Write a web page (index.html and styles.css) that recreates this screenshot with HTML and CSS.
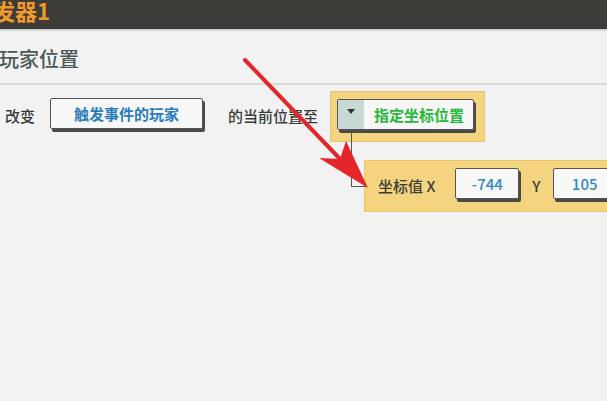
FILE: index.html
```html
<!DOCTYPE html>
<html lang="zh">
<head>
<meta charset="utf-8">
<link rel="stylesheet" href="styles.css">
</head>
<body>
<div class="page">
  <div class="header"><span class="header-title">触发器1</span></div>
  <div class="title">玩家位置</div>
  <div class="canvas">
    <div class="row">
      <span class="label first">改变</span>
      <div class="btn">触发事件的玩家</div>
      <span class="label mid">的当前位置至</span>
      <div class="group">
        <div class="ybox">
          <div class="dropdown">
            <div class="dd-toggle"><span class="tri"></span></div>
            <div class="dd-text">指定坐标位置</div>
          </div>
        </div>
        <div class="sub">
          <div class="ybox2">
            <span class="label2">坐标值 X</span>
            <div class="num">-744</div>
            <span class="label2 ylab">Y</span>
            <div class="num">105</div>
          </div>
        </div>
      </div>
    </div>
  </div>
  <svg class="arrow" width="607" height="401" viewBox="0 0 607 401">
    <line x1="245" y1="60" x2="342" y2="161" stroke="#e4262a" stroke-width="4" stroke-linecap="round"/>
    <polygon points="368,188 346,141 340,159 319,158" fill="#e4262a"/>
  </svg>
</div>
</body>
</html>
```
FILE: styles.css
```css
html, body {
  margin: 0;
  padding: 0;
  background: #f2f2f2;
}
.page {
  position: relative;
  width: 607px;
  height: 401px;
  overflow: hidden;
  font-family: "Noto Sans CJK SC", "Noto Sans", sans-serif;
}
.header {
  height: 29px;
  background: #3e3c38;
  overflow: hidden;
  box-shadow: 0 1px 2px rgba(0,0,0,0.25);
}
.header-title {
  display: block;
  margin: -5px 0 0 -29px;
  font-size: 22px;
  line-height: 30px;
  font-weight: 700;
  color: #f09a2c;
  white-space: nowrap;
}
.title {
  padding: 7px 0 0 0;
  height: 47px;
  line-height: 46px;
  font-size: 20px;
  font-weight: 500;
  color: #4a5858;
  border-bottom: 2px solid #d9d9d9;
  margin-left: -1px;
}
.canvas {
  padding-top: 6px;
}
.row {
  display: flex;
  align-items: flex-start;
  padding-left: 5px;
  width: 1000px;
}
.row > * {
  flex-shrink: 0;
  white-space: nowrap;
}
.label {
  font-size: 15px;
  line-height: 50px;
  color: #3a3a3a;
  font-weight: 500;
}
.label.mid {
  margin-left: 25px;
}
.btn {
  margin: 7px 0 0 15px;
  width: 151px;
  height: 29px;
  border: 1px solid #555;
  border-radius: 2px;
  background: #f8f8f8;
  box-shadow: 2px 3px 0 #4b4a46;
  color: #2a7cbf;
  font-size: 15px;
  font-weight: 700;
  text-align: center;
  line-height: 29px;
}
.group {
  margin-left: 12px;
  display: flex;
  flex-direction: column;
}
.ybox {
  align-self: flex-start;
  background: #f4d47f;
  border: 1px solid #e6c56e;
  padding: 7px 10px 11px 6px;
}
.dropdown {
  display: flex;
  height: 29px;
  width: 135px;
  border: 1px solid #555;
  border-radius: 2px;
  box-shadow: 2px 3px 0 #4b4a46;
  background: #f7f7f7;
  overflow: hidden;
}
.dd-toggle {
  width: 26px;
  flex-shrink: 0;
  background: #c7d8d5;
  display: flex;
  justify-content: center;
  padding-top: 9px;
  box-sizing: border-box;
}
.tri {
  width: 0;
  height: 0;
  border-left: 4px solid transparent;
  border-right: 4px solid transparent;
  border-top: 5px solid #2e3433;
}
.dd-text {
  padding-left: 10px;
  color: #25b83a;
  font-size: 15px;
  font-weight: 700;
  line-height: 29px;
  white-space: nowrap;
}
.sub {
  position: relative;
  margin: 18px 0 0 34px;
}
.sub::before {
  content: "";
  position: absolute;
  left: -13px;
  top: -28px;
  width: 14px;
  height: 54px;
  border-left: 1px solid #555;
  border-bottom: 1px solid #555;
}
.ybox2 {
  width: 300px;
  height: 50px;
  background: #f4d47f;
  border: 1px solid #e6c56e;
  display: flex;
  align-items: flex-start;
  padding-left: 13px;
}
.ybox2 > * {
  flex-shrink: 0;
  white-space: nowrap;
}
.label2 {
  font-size: 15px;
  line-height: 50px;
  color: #3d3d3a;
  font-weight: 500;
}
.label2.ylab {
  margin-left: 13px;
}
.num {
  margin: 7px 0 0 20px;
  width: 62px;
  height: 29px;
  border: 1px solid #555;
  border-radius: 2px;
  background: #f8f8f8;
  box-shadow: 2px 3px 0 #4b4a46;
  color: #3588c4;
  font-size: 15px;
  font-weight: 500;
  text-align: center;
  line-height: 29px;
}
.ylab + .num {
  margin-left: 12px;
}
.arrow {
  position: absolute;
  left: 0;
  top: 0;
  pointer-events: none;
}
```
